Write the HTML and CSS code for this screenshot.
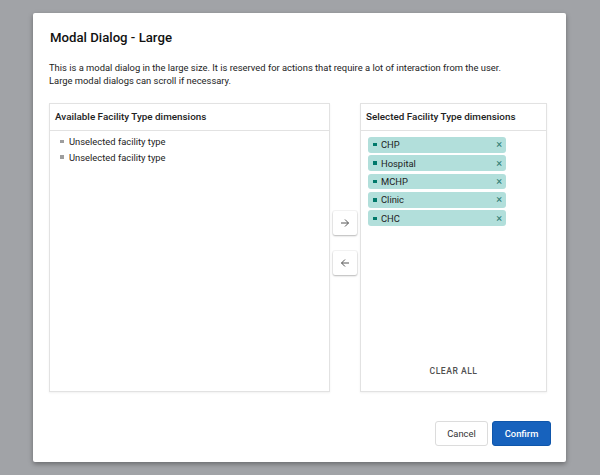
FILE: index.html
```html
<!DOCTYPE html>
<html lang="en">
<head>
<meta charset="utf-8">
<title>Modal Dialog - Large</title>
<link rel="stylesheet" href="styles.css">
</head>
<body>
<div class="modal">
  <h1 class="modal-title">Modal Dialog - Large</h1>
  <p class="modal-text">This is a modal dialog in the large size. It is reserved for actions that require a lot of interaction from the user.<br>Large modal dialogs can scroll if necessary.</p>
  <div class="transfer">
    <section class="panel">
      <header class="panel-header">Available Facility Type dimensions</header>
      <ul class="option-list">
        <li class="option"><span class="option-bullet"></span>Unselected facility type</li>
        <li class="option"><span class="option-bullet"></span>Unselected facility type</li>
      </ul>
    </section>
    <div class="transfer-actions">
      <button class="arrow-btn" type="button" aria-label="Select">
        <svg width="10" height="10" viewBox="0 0 10 10"><path d="M1 5h7.5M5 1.5L8.5 5L5 8.5" fill="none" stroke="#555" stroke-width="1"/></svg>
      </button>
      <button class="arrow-btn" type="button" aria-label="Deselect">
        <svg width="10" height="10" viewBox="0 0 10 10"><path d="M9 5H1.5M5 1.5L1.5 5L5 8.5" fill="none" stroke="#555" stroke-width="1"/></svg>
      </button>
    </div>
    <section class="panel panel-selected">
      <header class="panel-header">Selected Facility Type dimensions</header>
      <ul class="chip-list">
        <li class="chip"><span class="chip-bullet"></span><span class="chip-label">CHP</span><span class="chip-remove">×</span></li>
        <li class="chip"><span class="chip-bullet"></span><span class="chip-label">Hospital</span><span class="chip-remove">×</span></li>
        <li class="chip"><span class="chip-bullet"></span><span class="chip-label">MCHP</span><span class="chip-remove">×</span></li>
        <li class="chip"><span class="chip-bullet"></span><span class="chip-label">Clinic</span><span class="chip-remove">×</span></li>
        <li class="chip"><span class="chip-bullet"></span><span class="chip-label">CHC</span><span class="chip-remove">×</span></li>
      </ul>
      <footer class="panel-footer"><button class="clear-btn" type="button">CLEAR ALL</button></footer>
    </section>
  </div>
  <div class="modal-actions">
    <button class="btn btn-secondary" type="button">Cancel</button>
    <button class="btn btn-primary" type="button">Confirm</button>
  </div>
</div>
</body>
</html>
```
FILE: styles.css
```css
* { box-sizing: border-box; }

html, body {
  margin: 0;
  height: 100%;
}

body {
  background: #a1a3a7;
  font-family: Roboto, "Liberation Sans", sans-serif;
  color: #212121;
  padding: 13px 0 0 33px;
}

.modal {
  width: 533px;
  height: 449px;
  background: #fff;
  border-radius: 2px;
  box-shadow: 0 2px 5px rgba(0, 0, 0, 0.35);
  padding: 16px 15px 16px 16px;
  display: flex;
  flex-direction: column;
}

.modal-title {
  margin: 0;
  font-size: 13.2px;
  line-height: 17px;
  font-weight: 500;
  color: #111;
  padding-left: 1px;
}

.modal-text {
  margin: 15px 0 15px;
  font-size: 9.4px;
  line-height: 13.4px;
  color: #222;
}

.transfer {
  display: grid;
  grid-template-columns: 281px 30px 187px;
  height: 289px;
}

.panel {
  border: 1px solid #e2e2e2;
  box-shadow: 0 1px 2px rgba(0, 0, 0, 0.06);
  background: #fff;
  display: flex;
  flex-direction: column;
  min-height: 0;
}

.panel-header {
  height: 27px;
  border-bottom: 1px solid #e2e2e2;
  padding: 0 5px;
  font-size: 9.9px;
  font-weight: 500;
  line-height: 26px;
  color: #222;
}

.option-list {
  list-style: none;
  margin: 0;
  padding: 3px 0 0 10px;
}

.option {
  height: 15.6px;
  display: flex;
  align-items: center;
  font-size: 9.4px;
  color: #222;
}

.option-bullet {
  width: 3.5px;
  height: 3.5px;
  background: #9e9e9e;
  margin-right: 5.5px;
}

.transfer-actions {
  display: flex;
  flex-direction: column;
  align-items: center;
  gap: 16px;
  padding-top: 108.5px;
}

.arrow-btn {
  width: 24px;
  height: 24px;
  padding: 0;
  border: 0;
  border-radius: 2px;
  background: #fff;
  box-shadow: 0 1px 2px rgba(0, 0, 0, 0.25), 0 0 0 1px rgba(0, 0, 0, 0.04);
  display: flex;
  align-items: center;
  justify-content: center;
}

.chip-list {
  list-style: none;
  margin: 0;
  padding: 6px 0 0 7px;
  flex: 1;
  display: flex;
  flex-direction: column;
  gap: 2.6px;
}

.chip {
  width: 138px;
  height: 15.8px;
  background: #b2dfdb;
  border-radius: 3px;
  display: flex;
  align-items: center;
  padding: 0 4px 0 5px;
  font-size: 9.4px;
  color: #1d1d1d;
}

.chip-bullet {
  width: 3.5px;
  height: 3.5px;
  background: #00796b;
  margin-right: 4.5px;
}

.chip-label { flex: 1; }

.chip-remove {
  color: #2c7d73;
  font-size: 11px;
  line-height: 1;
}

.panel-footer {
  height: 39px;
  display: flex;
  align-items: center;
  justify-content: center;
}

.clear-btn {
  border: 0;
  background: none;
  padding: 0;
  font-family: inherit;
  font-size: 8.6px;
  font-weight: 500;
  letter-spacing: 0.5px;
  color: #4f4f4f;
}

.modal-actions {
  margin-top: auto;
  display: flex;
  justify-content: flex-end;
  gap: 4px;
}

.btn {
  height: 25px;
  border-radius: 3px;
  font-family: inherit;
  font-size: 9.4px;
  padding: 0;
}

.btn-secondary {
  width: 53px;
  background: #fff;
  border: 1px solid #dcdcdc;
  color: #333;
}

.btn-primary {
  width: 59px;
  background: #1762bd;
  border: 1px solid #0f56ab;
  color: #fff;
  font-weight: 500;
}
```
